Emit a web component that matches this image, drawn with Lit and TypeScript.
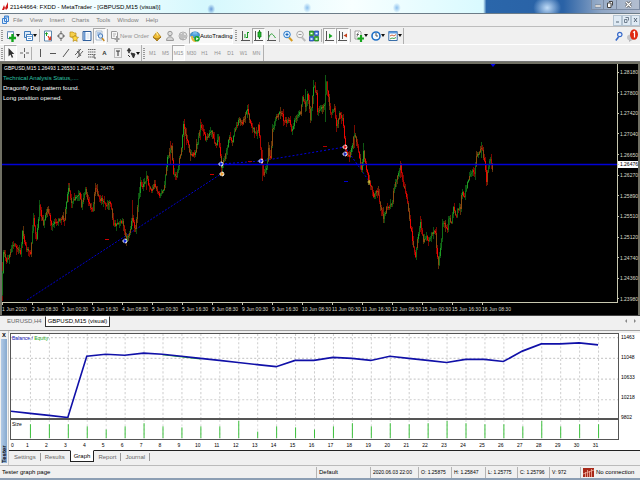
import { LitElement, html, svg, css, TemplateResult, SVGTemplateResult } from "lit";
import { customElement } from "lit/decorators.js";
import { classMap } from "lit/directives/class-map.js";

const FONT = css`"Liberation Sans", sans-serif`;

/* Price track as [x, y] turning points inside the plot. */
const TRACK: number[][] = [
  [3, 295], [3, 275], [4, 252], [7, 263], [13, 243], [17, 248], [21, 252], [23, 233], [27, 249], [31, 254], [34, 218],
  [37, 240], [40, 207], [44, 223], [48, 209], [52, 225], [58, 222], [62, 218], [65, 218], [67, 200], [69, 187],
  [72, 203], [77, 197], [80, 192], [82, 207], [86, 190], [88, 200], [93, 210], [96, 188], [100, 198], [107, 205],
  [111, 203], [114, 225], [123, 222], [127, 240], [130, 233], [133, 217], [136, 230], [138, 207], [141, 183],
  [143, 188], [147, 177], [152, 193], [155, 185], [160, 197], [165, 187], [168, 157], [172, 147], [174, 175],
  [177, 178], [182, 147], [184, 125], [187, 137], [191, 155], [195, 154], [198, 142], [201, 125], [206, 138],
  [212, 132], [216, 146], [219, 138], [222, 167], [224, 162], [227, 150], [230, 137], [233, 140], [239, 120],
  [243, 123], [248, 110], [252, 127], [257, 133], [259, 127], [262, 157], [264, 173], [267, 168], [269, 150],
  [271, 160], [273, 130], [277, 115], [282, 113], [285, 122], [290, 120], [292, 131], [296, 118], [301, 113],
  [303, 97], [306, 108], [308, 94], [311, 118], [314, 85], [317, 93], [318, 110], [325, 107], [327, 84], [329, 97],
  [331, 113], [335, 110], [337, 128], [340, 112], [343, 118], [346, 147], [347, 153], [350, 157], [355, 134],
  [359, 153], [362, 170], [364, 152], [367, 170], [370, 183], [374, 195], [378, 190], [380, 203], [384, 217],
  [387, 208], [393, 203], [394, 190], [397, 180], [401, 166], [403, 180], [407, 197], [411, 227], [416, 257],
  [418, 240], [421, 223], [424, 241], [427, 235], [429, 242], [432, 233], [436, 233], [437, 247], [439, 266],
  [442, 240], [443, 222], [448, 230], [449, 217], [452, 223], [454, 207], [457, 219], [458, 210], [461, 208],
  [462, 193], [465, 195], [468, 183], [473, 168], [475, 175], [477, 157], [482, 148], [485, 160], [487, 180],
  [489, 167], [491, 158], [493, 168],
];

/* Unusually long wicks: [x, top, bottom]. */
const SPIKES: number[][] = [
  [3, 262, 301], [23, 230, 248], [69, 183, 202], [127, 235, 244], [133, 200, 226], [147, 171, 190], [171, 141, 165],
  [185, 119, 150], [201, 119, 140], [248, 105, 118], [263, 150, 181], [306, 89, 112], [314, 80, 104],
  [326, 75, 122], [337, 120, 132], [355, 125, 148], [364, 143, 166], [401, 161, 178], [421, 216, 232],
  [482, 142, 158], [487, 176, 186],
];

const PLOT_X = 3;
const PLOT_Y = 64;

const TIMES = [
  "1 Jun 2020", "2 Jun 08:30", "3 Jun 00:30", "3 Jun 16:30", "4 Jun 08:30", "5 Jun 00:30", "5 Jun 16:30",
  "8 Jun 08:30", "9 Jun 00:30", "9 Jun 16:30", "10 Jun 08:30", "11 Jun 00:30", "11 Jun 16:30", "12 Jun 08:30",
  "15 Jun 00:30", "15 Jun 16:30", "16 Jun 08:30",
];
const PRICES = [
  "1.28180", "1.27800", "1.27420", "1.27040", "1.26650", "1.26270", "1.25890", "1.25510", "1.25120", "1.24740",
  "1.24360", "1.23980",
];
const BALANCE = [
  75, 77, 79, 81, 22, 20, 21, 19, 20, 22, 24, 26, 28, 30, 32, 26, 26, 23, 24, 26, 22, 24, 26, 28, 25, 25, 27, 17,
  10, 10, 9, 11,
];
const SIZES = [
  0, 13, 13, 13, 11, 8, 11, 14, 11, 10, 11, 11, 16, 6, 11, 10, 8, 11, 14, 11, 14, 13, 14, 16, 14, 13, 13, 11, 16,
  11, 13, 13,
];

function candles(): SVGTemplateResult[] {
  const out: SVGTemplateResult[] = [];
  let seed = 11;
  const rnd = () => (seed = (seed * 16807) % 2147483647) / 2147483647;
  const bar = (x: number, top: number, bottom: number, fill: string) =>
    out.push(svg`<rect x=${x - PLOT_X} y=${top - PLOT_Y} width="1" height=${bottom - top} fill=${fill} />`);
  for (const [x, top, bottom] of SPIKES) bar(x, top, bottom, x % 2 ? "#7c0a00" : "#0f5a12");
  let k = 0;
  let prev = TRACK[0][1];
  for (let x = 3; x <= 493; x++) {
    while (k < TRACK.length - 2 && TRACK[k + 1][0] < x) k++;
    const [x0, y0] = TRACK[k];
    const [x1, y1] = TRACK[k + 1];
    const base = x1 === x0 ? y1 : y0 + ((y1 - y0) * (x - x0)) / (x1 - x0);
    const y = base + (rnd() - 0.5) * 4;
    const up = y < prev;
    const top = Math.round(Math.min(prev, y));
    const bottom = Math.max(top + 1, Math.round(Math.max(prev, y)));
    const above = 1 + Math.round(rnd() * rnd() * 6);
    const below = 1 + Math.round(rnd() * rnd() * 6);
    const tone = rnd();
    const body = tone < 0.35 ? "#8a4c10" : up ? (tone < 0.7 ? "#126e16" : "#1e9c24") : tone < 0.6 ? "#b40400" : "#f00400";
    bar(x, top - above, bottom + below, tone < 0.2 ? "#5c3008" : up ? "#0c4f10" : "#780600");
    bar(x, top, bottom, body);
    prev = y;
  }
  return out;
}

const icon = (body: SVGTemplateResult, w = 10) =>
  html`<svg width=${w} height="12" viewBox="0 0 ${w} 12" aria-hidden="true">${body}</svg>`;

const ICONS: Record<string, SVGTemplateResult> = {
  newChart: svg`<path d="M1.5 1.5h6v7h-6z" fill="#fff" stroke="#5b7fa8"/><path d="M1 2h7" stroke="#8fb3d9"/><path d="M6.5 4v8M3 8h7" stroke="#12a51c" stroke-width="2.4"/>`,
  profiles: svg`<path d="M1.5 1.5h6v6h-6z" fill="#dceaf8" stroke="#3f7ab8"/><path d="M3.5 4.5h6v6h-6z" fill="#fff" stroke="#3f7ab8"/><path d="M4 6.5h5M5 8.5h3" stroke="#6aa0d8"/>`,
  market: svg`<path d="M1.5 1h7v10h-7z" fill="#fff" stroke="#5c87ae"/><path d="M3.500 6V3M2.200 4.200l1.300-1.700 1.300 1.700" stroke="#18a11c" fill="none"/><path d="M5 6l2 3.500M7.500 6.500V9.500H5.500" stroke="#e03a20" stroke-width="1.300" fill="none"/>`,
  target: svg`<circle cx="5" cy="6" r="2.600" fill="none" stroke="#777"/><path d="M5 1v3.500M5 7.500V11M1 6h2.700M6.300 6H9" stroke="#666"/>`,
  navigator: svg`<path d="M1 2h3l1 1h2v4H1z" fill="#f5cf4c" stroke="#b98a14" stroke-width=".7"/><path d="M6 5l1.200 2 2.300.300-1.700 1.700.4 2.400L6 10.200l-2 1.200.4-2.400L2.700 7.300l2.200-.3z" fill="#ffd83c" stroke="#a87c10" stroke-width=".6"/>`,
  terminal: svg`<path d="M1 1.500h8v9H1z" fill="#fff" stroke="#2f5f9c"/><path d="M2.500 2v8" stroke="#6c9ad2" stroke-width="2"/><path d="M4.500 4h3M4.500 6h3M4.500 8h3" stroke="#b5cbe4" stroke-width=".7"/>`,
  tester: svg`<path d="M1 1h6v9H1z" fill="#fff" stroke="#92aac2" stroke-width=".8"/><path d="M2 3h4M2 5h2" stroke="#5a8fd0"/><circle cx="5.500" cy="6" r="2.200" fill="#d4e8fa" stroke="#4a7ab8"/><path d="M7 8l2.300 3" stroke="#c88a20" stroke-width="1.500"/>`,
  order: svg`<path d="M1.500 1.500h5l1 1v6h-6z" fill="#f6f6f6" stroke="#9a9a9a"/><path d="M3 4h3M3 6h2" stroke="#b0b0b0"/><path d="M7 6v6M4.500 9h5" stroke="#a0a0a0" stroke-width="2"/>`,
  editor: svg`<path d="M1 7l4-5 4 5-4 4z" fill="#f0bd35" stroke="#a97812" stroke-width=".8"/><path d="M1 7.500l4 1.500 4-1.800M5 9v2" fill="none" stroke="#8f6410" stroke-width=".8"/><path d="M4 1.500l2 4" stroke="#ffe89a" stroke-width="1.200"/>`,
  user: svg`<circle cx="5" cy="3.500" r="2.200" fill="#ddd" stroke="#999"/><path d="M1.500 10.500c0-5 7-5 7 0z" fill="#d5d5d5" stroke="#999"/>`,
  signal: svg`<circle cx="5" cy="6" r="4" fill="#e4e4e4" stroke="#b0b0b0"/><path d="M3 4v5M5 3v7M7 5v3" stroke="#999"/>`,
  auto: svg`<ellipse cx="5" cy="5" rx="4.500" ry="3" fill="#4b9bd8" stroke="#23679f" stroke-width=".6"/><path d="M2.500 4.500C3 0 7 0 7.500 4.500z" fill="#76b9ea"/><path d="M2 6c0 4 2 5 4 5" fill="none" stroke="#e8b637" stroke-width="2"/><circle cx="7" cy="8.700" r="2.800" fill="#15a629"/><path d="M6.200 7.200v3L8.700 8.700z" fill="#fff"/>`,
  bars: svg`<path d="M1.500 1v9.500M0 10.500h9" stroke="#555"/><path d="M6.500 2v6M5 7.500h1.500M6.500 2.500H8M4 4v4" stroke="#159a20" fill="none"/>`,
  candle: svg`<path d="M1.500 1v9.500M0 10.500h9" stroke="#555"/><path d="M5.500 0v9" stroke="#137a1b"/><path d="M4 2h3v5H4z" fill="#21bf2c" stroke="#0c7315" stroke-width=".8"/>`,
  line: svg`<path d="M1.500 1v9.500M0 10.500h9" stroke="#555"/><path d="M1.500 8C4 2 5 3 8.500 8" fill="none" stroke="#2aa034"/>`,
  zoomIn: svg`<path d="M6 7.500l3.300 3.500" stroke="#d79b1e" stroke-width="2"/><circle cx="4" cy="4.500" r="3.300" fill="#dff0ff" stroke="#2e7cca"/><path d="M4 2.800v3.400M2.500 4.500h3" stroke="#1866bb"/>`,
  zoomOut: svg`<path d="M6 7.500l3.300 3.500" stroke="#bbb" stroke-width="2"/><circle cx="4" cy="4.500" r="3.300" fill="#f4f4f4" stroke="#a8a8a8"/><path d="M2.500 4.500h3" stroke="#999"/>`,
  tiles: svg`<path d="M.5 1h4v4.500h-4zM5.500 6.500h4V11h-4z" fill="#38b534" stroke="#157018" stroke-width=".7"/><path d="M5.500 1h4v4.500h-4zM.5 6.500h4V11h-4z" fill="#3e78dc" stroke="#193d94" stroke-width=".7"/><path d="M1.500 3.500h2M6.500 3.500h2M1.500 9h2M6.500 9h2" stroke="#fff" stroke-width="1.500"/>`,
  scroll: svg`<path d="M1.500 1v9.500M0 10.500h9" stroke="#555"/><path d="M4 3.500v5L7.500 6z" fill="#18a723"/>`,
  shift: svg`<path d="M1.500 1v9.500M0 10.500h9M4.500 2v7" stroke="#555"/><path d="M9 3.500v4L5.500 5.500z" fill="#c4401c"/>`,
  indicators: svg`<path d="M1 1h5l1 1v7H1z" fill="#fff" stroke="#888" stroke-width=".8"/><path d="M4.500 2.500C3 2.500 4 7 2.500 7M2.500 4.500h2.500" fill="none" stroke="#555" stroke-width=".8"/><path d="M7 5v7M3.500 8.500H10" stroke="#17a51f" stroke-width="2.200"/>`,
  clock: svg`<circle cx="5" cy="6" r="4" fill="#f6fbff" stroke="#1f6fc4" stroke-width="1.600"/><path d="M5 3v3h2" fill="none" stroke="#444" stroke-width=".9"/>`,
  template: svg`<path d="M.8 1.500h8.400v9H.8z" fill="#fff" stroke="#3a6ea8"/><path d="M1 2.500h8" stroke="#5c9be0" stroke-width="2"/><path d="M2 6l2-1 2 1 2-1.500" fill="none" stroke="#c8542c" stroke-width=".9"/><path d="M2 9l2-1 2 .500 2-1" fill="none" stroke="#2a9a3a" stroke-width=".9"/>`,
  cursor: svg`<path d="M2.500 1v8.500l2-2 1.300 3.300 1.400-.6-1.400-3.200h2.500z" fill="#333"/>`,
  cross: svg`<path d="M5.500 1v4M5.500 7v4M1 6h3M7 6h3" stroke="#666"/>`,
  vline: svg`<path d="M5.500 2v8" stroke="#555"/>`,
  hline: svg`<path d="M2 6.500h6" stroke="#555"/>`,
  trend: svg`<path d="M2 10l6-8" stroke="#555"/>`,
  channel: svg`<path d="M1 8l6-6M3 11l6-7M3 4l4 5M5 2v8" stroke="#555" stroke-width=".9"/>`,
  fibo: svg`<path d="M1 2.500h8M1 5h8M1 7.500h8M1 10h5" stroke="#666" stroke-dasharray="1.500 .5"/><path d="M7 8v3h2" fill="none" stroke="#555"/>`,
  label: svg`<path d="M1.500 1.500h7v9h-7z" fill="none" stroke="#888" stroke-dasharray="1 1"/><path d="M3 4h4M5 4v5" stroke="#333"/>`,
  arrows: svg`<path d="M3 1l2 3H1zM2.500 4h1v2h-1z" fill="#333" stroke="#333" stroke-width=".5"/><path d="M5 6l4 1-1.500 4zM2 8l2 2" fill="#333" stroke="#333"/>`,
};

@customElement("tool-button")
class ToolButton extends LitElement {
  static properties = {
    glyph: {}, name: {}, text: {}, menu: { type: Boolean }, pressed: { type: Boolean }, dim: { type: Boolean },
  };
  declare glyph: string;
  declare name: string;
  declare text: string;
  declare menu: boolean;
  declare pressed: boolean;
  declare dim: boolean;
  static styles = css`
    :host { display: block; flex: none; }
    button {
      box-sizing: border-box; display: flex; align-items: center; justify-content: center;
      min-width: 13px; height: 16px; padding: 0; border: 1px solid transparent; background: none;
      font: 6px/8px ${FONT}; color: #000; white-space: nowrap;
    }
    .menu { min-width: 17px; }
    .pressed { background: #f8f8f8; border-color: #aaa #fff #fff #aaa; }
    .dim { color: #909090; }
    .small { font-size: 5px; }
    .bold { font-weight: bold; color: #333; }
    svg { flex: none; display: block; }
  `;
  render() {
    return html`<button
      aria-label=${this.name}
      class=${classMap({
        menu: !!this.menu, pressed: !!this.pressed, dim: !!this.dim,
        small: !!this.text && !this.glyph && !!this.dim, bold: this.text === "A",
      })}
    >${this.glyph ? icon(ICONS[this.glyph]) : null}${this.text ?? null}${this.menu
      ? html`<svg width="4" height="3" viewBox="0 0 4 3"><path d="M0 0h4L2 3z" fill="#111" /></svg>`
      : null}</button>`;
  }
}

const tool = (glyph: string, name: string, pressed = false) =>
  html`<tool-button .glyph=${glyph} .name=${name} .pressed=${pressed}></tool-button>`;
const drop = (glyph: string, name: string) =>
  html`<tool-button .glyph=${glyph} .name=${name} .menu=${true}></tool-button>`;

@customElement("price-chart")
class PriceChart extends LitElement {
  static styles = css`
    :host { display: block; background: #000; color: #dcdccc; font: 5px/8px ${FONT}; }
    .frame {
      display: grid; grid-template-columns: 1fr 20px; grid-template-rows: 239px 12px;
      border: 2px solid #707064; border-width: 2px 2px 0 2px;
    }
    .plot { position: relative; border-right: 1px solid #c8c8b0; border-bottom: 1px solid #c8c8b0; overflow: hidden; }
    .plot svg { display: block; width: 100%; height: 238px; }
    .notes { position: absolute; left: 1px; top: 0; white-space: nowrap; }
    .notes p { margin: 0; font-size: 6px; line-height: 10px; color: #fff; }
    .notes p.head { color: #2fc4a8; }
    .notes p.quote { font-size: 5px; line-height: 8px; padding: 0 0 1px 1px; }
    .prices { position: relative; display: flex; flex-direction: column; justify-content: space-between; padding: 4px 0 0; }
    .prices span::before, .times span::before { content: ""; background: #c8c8b0; }
    .prices span { display: flex; align-items: center; gap: 1px; white-space: nowrap; }
    .prices span::before { width: 1px; height: 1px; }
    .prices .now { position: absolute; left: 0; top: 97px; right: 0; height: 7px; line-height: 7px; background: #fff; color: #000; }
    .times { display: flex; }
    .times span { flex: 0 0 30px; display: block; line-height: 8px; white-space: nowrap; }
    .times span::before { display: block; width: 1px; height: 2px; }
  `;
  render() {
    const dash = (x: number, y: number, c: string) =>
      svg`<rect x=${x - PLOT_X} y=${y - PLOT_Y} width="4" height="1" fill=${c} />`;
    const mark = (x: number, y: number, c: string) =>
      svg`<circle cx=${x - PLOT_X} cy=${y - PLOT_Y} r="2" fill=${c} stroke="#fff" stroke-width="1" stroke-dasharray="3 1" />`;
    return html`<div class="frame">
      <div class="plot">
        <svg role="img" aria-label="GBPUSD M15 candles">
          <path d="M25 236L219 110" stroke="#0000d0" stroke-dasharray="2 1.500" />
          <path d="M219 100L259 97L343 83L367 117" fill="none" stroke="#0000e0" stroke-dasharray="2 2" />
          ${candles()}
          <line x1="0" y1="100.500" x2="100%" y2="100.500" stroke="#0000d8" stroke-width="1.300" />
          ${dash(106, 239, "#d00000")}${dash(211, 174, "#d00000")}${dash(249, 161, "#b00000")}
          ${dash(324, 146, "#b00000")}${dash(345, 181, "#0000d0")}
          ${mark(126, 241, "#1428d8")}${mark(222, 164, "#1428d8")}${mark(223, 174, "#f0a030")}
          ${mark(262, 161, "#2838ff")}${mark(346, 147, "#e02020")}${mark(346, 154, "#2030c0")}
          <path d="M365.500 118h3M367 116v5" stroke="#d8d040" />
          <path d="M488.500 0h5l-2.500 3z" fill="#0000f0" />
        </svg>
        <div class="notes">
          <p class="quote">GBPUSD,M15 1.26493 1.26530 1.26426 1.26476</p>
          <p class="head">Technical Analysis Status,....</p>
          <p>Dragonfly Doji pattern found.</p>
          <p>Long position opened.</p>
        </div>
      </div>
      <div class="prices">${PRICES.map((p) => html`<span>${p}</span>`)}<span class="now">1.26476</span></div>
      <div class="times">${TIMES.map((t) => html`<span>${t}</span>`)}</div>
    </div>`;
  }
}

@customElement("tester-panel")
class TesterPanel extends LitElement {
  static styles = css`
    :host { display: flex; border-top: 1px solid #a0a0a0; background: #fff; font: 5px/8px ${FONT}; color: #000; }
    .side { flex: 0 0 7px; display: flex; flex-direction: column; background: #f0f0f0; border-right: 1px solid #c8c8c8; }
    .side button { border: 0; padding: 0; background: none; font: bold 7px/8px ${FONT}; color: #111; }
    .strip {
      flex: 1; margin: 0 1px 2px 1px; background: linear-gradient(90deg, #86a9cf, #b2cae6);
      writing-mode: vertical-rl; transform: rotate(180deg); font: bold 6px/6px ${FONT}; text-align: left;
    }
    .main { flex: 1; min-width: 0; display: flex; flex-direction: column; padding-top: 2px; background: #f0f0f0; }
    .graphs { display: grid; grid-template-columns: 1fr 21px; padding-left: 1px; background: #fff; }
    .box { position: relative; border: solid #555; border-width: 1px 1px 2px 1px; height: 84px; }
    .size { border-width: 0 1px 1px 1px; height: 19px; }
    .box svg { display: block; width: 100%; height: 100%; }
    .cap { position: absolute; left: 1px; top: 0; color: #1414b8; }
    .size .cap { color: #000; }
    .cap b { font-weight: normal; color: #22aa22; }
    .levels { display: flex; flex-direction: column; gap: 12px; padding-left: 2px; height: 84px; }
    .ticks { display: grid; grid-template-columns: 8px repeat(31, minmax(0, 1fr)) 14px; height: 10px; line-height: 10px; text-align: center; }
    .ticks span:first-child { text-align: left; padding-left: 1px; }
    .tabs { display: flex; background: #f0f0f0; border-top: 1px solid #222; height: 14px; padding-left: 1px; }
    .tabs button {
      border: 0; border-right: 1px solid #999; padding: 0 4px; margin: 2px 0 4px; background: none;
      font: 6px/8px ${FONT}; color: #666;
    }
    .tabs button.on { margin: -1px 0 3px; border: 1px solid #222; border-top-color: #fff; background: #fff; color: #000; padding: 0 3px; }
    .tabs button.plain { border-right-color: transparent; }
  `;
  render() {
    const step = 19;
    const xs = BALANCE.map((_, i) => i * step);
    const v = xs.slice(1).map((x) => `M${x}.500 0V84`).join("");
    return html`<div class="side"><button aria-label="Close">x</button><div class="strip">Tester</div></div>
      <div class="main">
        <div class="graphs">
          <div class="box">
            <svg viewBox="0 0 609 81" preserveAspectRatio="none" role="img" aria-label="Balance and equity">
              <path d=${v + "M0 3.500H609M0 23.500H609M0 43.500H609M0 63.500H609"} stroke="#cdcdcd" stroke-dasharray="2 2" />
              <path d="M152 20L190 24" stroke="#22aa22" />
              <polyline points=${BALANCE.map((y, i) => `${i * step},${y - 0.5}`).join(" ")} fill="none" stroke="#1010a8" stroke-width="1.600" />
            </svg>
            <div class="cap">Balance / <b>Equity</b></div>
          </div>
          <div class="levels"><span>11463</span><span>11048</span><span>10633</span><span>10218</span><span>9802</span></div>
          <div class="box size">
            <svg viewBox="0 0 609 18" preserveAspectRatio="none" role="img" aria-label="Position size">
              <path d=${v} stroke="#d8d8d8" stroke-dasharray="2 2" />
              ${SIZES.map((h, i) => svg`<rect x=${i * step} y=${17 - h} width="1" height=${h} fill="#3cc03c" />`)}
            </svg>
            <div class="cap">Size</div>
          </div>
          <div></div>
          <div class="ticks">${BALANCE.map((_, i) => html`<span>${i}</span>`)}</div>
        </div>
        <div class="tabs" role="tablist">
          <button role="tab">Settings</button><button role="tab" class="plain">Results</button
          ><button role="tab" class="on" aria-selected="true">Graph</button><button role="tab">Report</button
          ><button role="tab">Journal</button>
        </div>
      </div>`;
  }
}

@customElement("app-root")
class AppRoot extends LitElement {
  static styles = css`
    :host { display: flex; flex-direction: column; min-height: 100vh; background: #f0f0f0; font: 6px/8px ${FONT}; color: #000; }
    .title {
      display: flex; align-items: center; gap: 2px; height: 13px; padding-left: 2px; border-bottom: 1px solid #6c7c88; flex: none;
      background:
        radial-gradient(ellipse 4px 5px at 33% 70%, #6a9bd8, transparent),
        radial-gradient(ellipse 4px 5px at 48% 60%, #8cc0ee, transparent),
        radial-gradient(ellipse 4px 5px at 62% 60%, #8cc0ee, transparent),
        radial-gradient(ellipse 14px 12px at 85.5% 60%, #c0dcf8, transparent),
        linear-gradient(90deg, #fdffff 0, #eefdff 18%, #d5f8fd 32%, #f8ffff 55%, #d9faff 75.5%, #2a66aa 76%, #2a62a6 88%, #8ea6c6 94%, #b4bed0 100%);
    }
    .title h1 { margin: 0; font: 6px/12px ${FONT}; color: #000; flex: 1; white-space: nowrap; }
    .win { display: flex; align-self: flex-start; }
    .win button { box-sizing: border-box; width: 13px; height: 10px; padding: 0; border: 1px solid #7c8ca4; border-width: 0 1px 1px 0; background: #b4bfd055; display: flex; align-items: center; justify-content: center; }
    .win button:first-child { border-left-width: 1px; }
    .win button:last-child { width: 23px; }
    .bar { display: flex; align-items: center; border-bottom: 1px solid #bdbdbd; flex: none; }
    .menu { height: 12px; padding-left: 2px; }
    .menu svg { display: block; }
    .menu nav { display: flex; flex: 1; }
    .menu nav button { border: 0; background: none; padding: 0 3px 0 4px; font: inherit; color: #7c7c7c; }
    .mdi { display: flex; }
    .mdi button { box-sizing: border-box; width: 9px; height: 11px; padding: 0; border: 1px solid #b4c4d2; background: #dfeaf4; display: flex; align-items: center; justify-content: center; }
    .row { height: 17px; border-bottom-color: #fff; }
    .row.two { height: 16px; border-bottom-color: #777; }
    .grip { flex: none; width: 2px; height: 11px; margin: 0 1px; background: repeating-linear-gradient(#999 0 1px, transparent 1px 2px); }
    .grip.far { margin: 0 2px; }
    .sep { flex: none; width: 1px; height: 13px; margin: 0 1px; background: #b0b0b0; }
    .edge { flex: none; width: 1px; height: 16px; background: #b0b0b0; }
    .grow { flex: 1; }
    .bell { display: flex; align-items: center; gap: 4px; padding-right: 2px; }
    .bell button { border: 0; padding: 0; background: none; display: block; }
    .bell svg { display: block; }
    price-chart { flex: none; }
    .charts { display: flex; align-items: flex-start; height: 14px; flex: none; border-top: 1px solid #444; padding-left: 4px; }
    .charts button { border: 0; background: none; padding: 0 3px; font: 6px/11px ${FONT}; color: #666; height: 11px; }
    .charts button.on { background: #fff; color: #000; border: 1px solid #333; border-top-color: #fff; padding: 0 2px; line-height: 9px; }
    .charts svg { margin: 2px 3px 0 0; }
    tester-panel { flex: 1; }
    .status { display: grid; flex: none; align-items: center; height: 12px; border-top: 1px solid #bbb; border-bottom: 2px solid #8d9fb4;
      grid-template-columns: 1fr 54px 48px 33px 34px 32px 32px 31px 60px; }
    .status span { border-left: 1px solid #b4b4b4; padding-left: 2px; line-height: 11px; white-space: nowrap; }
    .status .num { font-size: 5px; }
    .status span:first-child { border: 0; }
    .status .net { display: flex; align-items: center; gap: 2px; }
  `;
  render(): TemplateResult {
    return html`
      <header class="title">
        <svg width="6" height="9" viewBox="0 0 6 9"><path d="M0 8l2-5 1 3 3-6v6L4 8 3 6 2 8z" fill="#d01818" /></svg>
        <h1>21144664: FXDD - MetaTrader - [GBPUSD,M15 (visual)]</h1>
        <div class="win">
          <button aria-label="Minimize"><svg width="6" height="6"><path d="M0 3h6v2H0z" fill="#fff" stroke="#555" stroke-width=".5" /></svg></button>
          <button aria-label="Restore"><svg width="6" height="7"><path d="M2 .5h3.500v4M.5 2h3.500v4.500H.5z" fill="#fff" stroke="#444" /></svg></button>
          <button aria-label="Close"><svg width="7" height="7"><path d="M1 1l5 5M6 1L1 6" stroke="#555" stroke-width="2.500" /><path d="M1 1l5 5M6 1L1 6" stroke="#fff" stroke-width="1.200" /></svg></button>
        </div>
      </header>
      <div class="bar menu">
        <svg width="7" height="10" viewBox="0 0 7 10"><path d="M.5 3.500h4v5h-4zM2.500 1h4v5.500h-4z" fill="#dcecff" stroke="#3e82d0" /><path d="M2.500 2h4" stroke="#3e82d0" /></svg>
        <nav>${["File", "View", "Insert", "Charts", "Tools", "Window", "Help"].map((m) => html`<button>${m}</button>`)}</nav>
        <div class="mdi">
          <button aria-label="Minimize chart"><svg width="5" height="6"><path d="M1 5h3" stroke="#567" /></svg></button>
          <button aria-label="Restore chart"><svg width="5" height="6"><path d="M1.500 .5h3v3M.5 2.500h2.500v3H.5z" fill="none" stroke="#567" stroke-width=".8" /></svg></button>
          <button aria-label="Close chart"><svg width="5" height="6"><path d="M1 1l3 4M4 1L1 5" stroke="#567" /></svg></button>
        </div>
      </div>
      <div class="bar row">
        <i class="grip"></i>
        ${drop("newChart", "New chart")}${drop("profiles", "Profiles")}<i class="sep"></i>
        ${tool("market", "Market watch")}${tool("target", "Data window")}${tool("navigator", "Navigator")}${tool("terminal", "Terminal")}${tool("tester", "Strategy tester", true)}
        <i class="sep"></i>
        <tool-button .glyph=${"order"} .name=${"New Order"} .text=${"New Order"} .dim=${true}></tool-button>
        ${tool("editor", "Editor")}${tool("user", "Account")}${tool("signal", "Signals")}
        <tool-button .glyph=${"auto"} .name=${"AutoTrading"} .text=${"AutoTrading"} .pressed=${true}></tool-button>
        <i class="grip far"></i>
        ${tool("bars", "Bar chart")}${tool("candle", "Candlesticks", true)}${tool("line", "Line chart")}<i class="sep"></i>
        ${tool("zoomIn", "Zoom in")}${tool("zoomOut", "Zoom out")}${tool("tiles", "Tile windows")}<i class="sep"></i>
        ${tool("scroll", "Auto scroll", true)}${tool("shift", "Chart shift", true)}<i class="sep"></i>
        ${drop("indicators", "Indicators")}${drop("clock", "Periods")}${drop("template", "Templates")}<i class="edge"></i>
        <i class="grow"></i>
        <div class="bell">
          <button aria-label="Search"><svg width="8" height="10" viewBox="0 0 8 10"><path d="M3.500 6L.8 9.500" stroke="#3568c8" stroke-width="1.600" /><circle cx="4.800" cy="3.500" r="2.200" fill="#eef4ff" stroke="#3568c8" stroke-width="1.200" /></svg></button>
          <button aria-label="Notifications"><svg width="11" height="13" viewBox="0 0 11 13"><ellipse cx="3.500" cy="8.500" rx="3.500" ry="3" fill="#c4c4c8" /><path d="M2 11l0 2 3-2z" fill="#b4b4b8" /><ellipse cx="7" cy="5.500" rx="4" ry="5.200" fill="#df2a12" /><path d="M6 3.500L7.500 2.500V8.500" fill="none" stroke="#fff" stroke-width="1.200" /></svg></button>
        </div>
      </div>
      <div class="bar row two">
        <i class="grip"></i>
        ${tool("cursor", "Cursor", true)}${tool("cross", "Crosshair")}<i class="sep"></i>
        ${tool("vline", "Vertical line")}${tool("hline", "Horizontal line")}${tool("trend", "Trendline")}${tool("channel", "Channel")}${tool("fibo", "Fibonacci")}
        <tool-button .name=${"Text"} .text=${"A"}></tool-button>${tool("label", "Text label")}${drop("arrows", "Arrows")}<i class="edge"></i>
        <i class="grip"></i>
        ${["M1", "M5", "M15", "M30", "H1", "H4", "D1", "W1", "MN"].map(
          (t) => html`<tool-button .name=${t} .text=${t} .dim=${true} .pressed=${t === "M15"}></tool-button>`,
        )}<i class="edge"></i>
      </div>
      <price-chart></price-chart>
      <div class="charts">
        <button>EURUSD,H4</button><button class="on">GBPUSD,M15 (visual)</button><i class="grow"></i>
        <svg width="13" height="6"><path d="M3 1v4L1 3zM10 1v4l2-2z" fill="#888" /></svg>
      </div>
      <tester-panel></tester-panel>
      <footer class="status">
        <span>Tester graph page</span><span>Default</span><span class="num">2020.06.03 22:00</span><span class="num">O: 1.25875</span
        ><span class="num">H: 1.25847</span><span class="num">L: 1.25775</span><span class="num">C: 1.25796</span><span class="num">V: 972</span
        ><span class="net"><svg width="11" height="9" viewBox="0 0 11 9"><path d="M0 0h11v9H0z" fill="#a82818" /><path d="M2.500 9V4M4.500 9V2M6.500 9V3M8.500 9V1M0 6l11-4" stroke="#f0b0a0" stroke-width=".8" /></svg>No connection</span>
      </footer>`;
  }
}
